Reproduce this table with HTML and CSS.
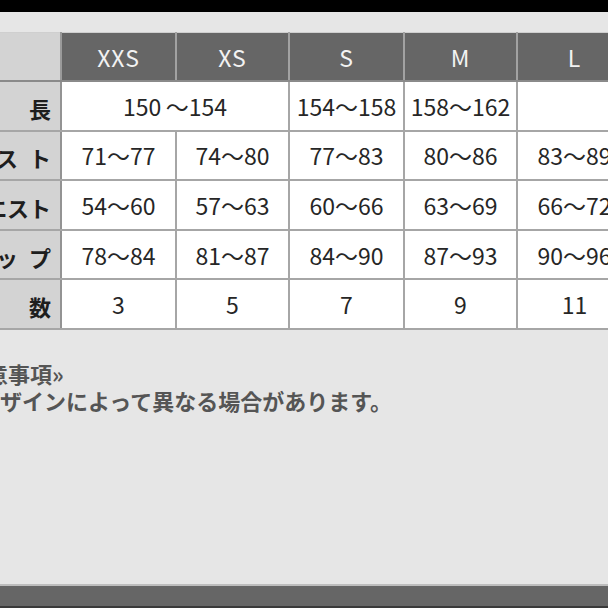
FILE: index.html
```html
<!DOCTYPE html>
<html lang="ja">
<head>
<meta charset="utf-8">
<link rel="stylesheet" href="styles.css">
</head>
<body>
<div class="page">
  <div class="topbar"></div>
  <div class="table-wrap">
    <table class="size-table">
      <colgroup>
        <col class="c-label"><col class="c-a"><col class="c-b"><col class="c-a"><col class="c-b"><col class="c-a">
      </colgroup>
      <thead>
        <tr>
          <th class="corner"></th>
          <th>XXS</th><th>XS</th><th>S</th><th>M</th><th>L</th>
        </tr>
      </thead>
      <tbody>
        <tr>
          <th class="label"><span class="lbl">身長</span></th>
          <td colspan="2">150&thinsp;～154</td><td>154～158</td><td>158～162</td><td></td>
        </tr>
        <tr>
          <th class="label"><span class="lbl">バスト</span></th>
          <td>71～77</td><td>74～80</td><td>77～83</td><td>80～86</td><td>83～89</td>
        </tr>
        <tr>
          <th class="label"><span class="lbl">ウエスト</span></th>
          <td>54～60</td><td>57～63</td><td>60～66</td><td>63～69</td><td>66～72</td>
        </tr>
        <tr>
          <th class="label"><span class="lbl">ヒップ</span></th>
          <td>78～84</td><td>81～87</td><td>84～90</td><td>87～93</td><td>90～96</td>
        </tr>
        <tr>
          <th class="label"><span class="lbl">号数</span></th>
          <td>3</td><td>5</td><td>7</td><td>9</td><td>11</td>
        </tr>
      </tbody>
    </table>
  </div>
  <div class="notes">
    <p class="note-title">≪注意事項»</p>
    <p class="note-text">※デザインによって異なる場合があります。</p>
  </div>
  <div class="bottombar"></div>
</div>
</body>
</html>
```
FILE: styles.css
```css
html, body {
  margin: 0;
  padding: 0;
  background: #e6e6e6;
  overflow: hidden;
}
.page {
  width: 608px;
  height: 608px;
  display: flex;
  flex-direction: column;
  overflow: hidden;
  font-family: "Noto Sans CJK JP", "Noto Sans", sans-serif;
}
.topbar {
  height: 12px;
  background: #000;
  flex: none;
}
.table-wrap {
  margin-top: 20px;
  margin-left: -60px;
  flex: none;
}
.size-table {
  border-collapse: collapse;
  table-layout: fixed;
  width: 692px;
}
.c-label { width: 121px; }
.c-a { width: 115px; }
.c-b { width: 113px; }
.size-table thead th {
  height: 47px;
  padding: 0;
  background: #666;
  color: #f2f2f2;
  font-weight: normal;
  font-size: 23px;
  letter-spacing: 1px;
  border-top: 1px solid #cfcfcf;
  border-right: 2px solid #a2a2a2;
  border-bottom: 2px solid #8a8a8a;
}
.size-table thead th.corner {
  background: #d3d3d3;
  border-right: 2px solid #9a9a9a;
}
.size-table tbody td,
.size-table tbody th {
  height: 47.6px;
  padding: 0;
  border: 2px solid #a6a6a6;
}
.size-table tbody td {
  background: #fff;
  color: #262626;
  text-align: center;
  font-size: 23px;
  white-space: nowrap;
}
.size-table tbody th.label {
  background: #d3d3d3;
  color: #1e1e1e;
  text-align: right;
  font-size: 22px;
  font-weight: bold;
  padding-right: 9px;
  white-space: nowrap;
  border-left: none;
  border-right: 2px solid #939393;
}
.lbl {
  display: inline-block;
  width: 88px;
  text-align: justify;
  text-align-last: justify;
  text-justify: inter-character;
  vertical-align: middle;
}
.notes {
  margin-top: 30px;
  color: #555;
  font-weight: bold;
  font-size: 22px;
  line-height: 27px;
}
.notes p {
  margin: 0;
  white-space: nowrap;
}
.note-title {
  margin-left: -58px !important;
}
.note-text {
  margin-left: -44px !important;
}
.bottombar {
  margin-top: auto;
  height: 20px;
  background: #666;
  border-top: 2px solid #bdbdbd;
  border-bottom: 2px solid #3a3a3a;
  flex: none;
}
```
